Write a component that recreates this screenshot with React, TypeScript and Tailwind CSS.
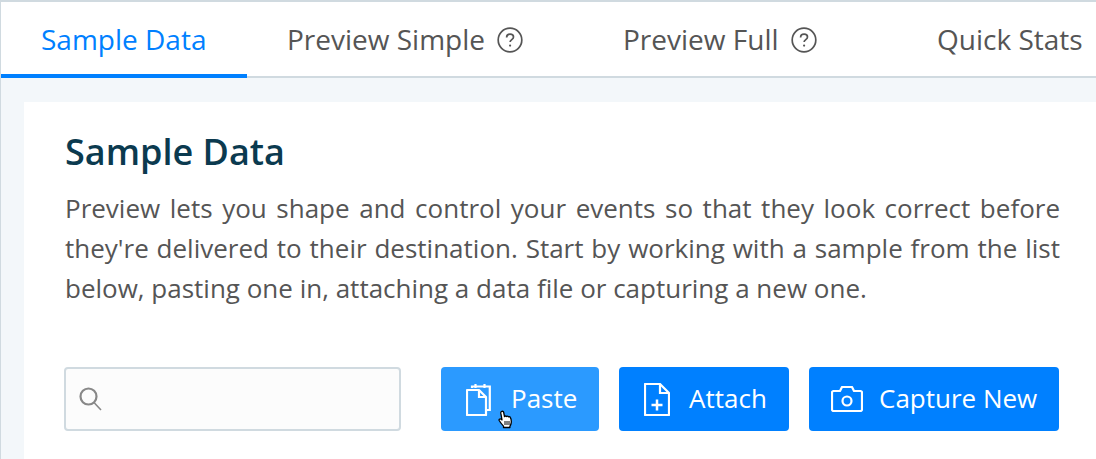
function HelpIcon() {
  return (
    <svg width="26" height="26" viewBox="0 0 26 26" fill="none" stroke="#555" className="shrink-0">
      <circle cx="13" cy="13" r="11.8" strokeWidth="1.7" />
      <path d="M9.6 10.4c0-2 1.5-3.3 3.5-3.3s3.4 1.2 3.4 2.9c0 2.6-3.4 2.6-3.4 5.1" strokeWidth="1.7" />
      <circle cx="13.1" cy="18.6" r="1.1" fill="#555" stroke="none" />
    </svg>
  );
}

function SearchIcon() {
  return (
    <svg width="23" height="24" viewBox="0 0 23 24" fill="none" stroke="#888" className="shrink-0">
      <circle cx="9.500" cy="9.500" r="8" strokeWidth="2.200" />
      <path d="M15 15.500l7 7.500" strokeWidth="1.600" />
    </svg>
  );
}

function PasteIcon() {
  return (
    <svg width="26" height="33" viewBox="0 0 26 33" fill="none" stroke="#fff" strokeWidth="2.2" className="shrink-0">
      <path d="M6 5V3.500h17.800V27H20" />
      <path d="M9.500 1v4M18.500 1v4" />
      <path d="M1 7h12l7 7v18H1z" strokeLinejoin="round" />
      <path d="M13 7v7h7" />
    </svg>
  );
}

function AttachIcon() {
  return (
    <svg width="26" height="33" viewBox="0 0 26 33" fill="none" stroke="#fff" strokeWidth="2.2" className="shrink-0">
      <path d="M1 1h15l9 9v22H1z" strokeLinejoin="round" />
      <path d="M16 1v9h9" />
      <path d="M13 16.500v11M7.500 22h11" strokeWidth="2.500" />
    </svg>
  );
}

function CameraIcon() {
  return (
    <svg width="32" height="26" viewBox="0 0 32 26" fill="none" stroke="#fff" strokeWidth="2.2" className="shrink-0">
      <path d="M2.500 5H9l2-4h10l2 4h6.500A1.500 1.500 0 0 1 31 6.500V23.500A1.500 1.500 0 0 1 29.500 25H2.500A1.500 1.500 0 0 1 1 23.500V6.500A1.500 1.500 0 0 1 2.500 5z" strokeLinejoin="round" />
      <circle cx="16" cy="15" r="4.500" />
    </svg>
  );
}

function HandCursor() {
  return (
    <svg width="16" height="20" viewBox="0 0 16 20" className="absolute left-[57px] top-[43px]">
      <path
        d="M3.500 1.500c1-.6 2 0 2.200 1l.8 4c.6-.6 1.500-.5 2 0 .6-.4 1.500-.3 2 .3.700-.3 1.500 0 1.800.6.800 1.500 1.200 3.500.9 5.500-.2 1.500-.7 2.500-1.300 3.400v1.200H5.500v-1.400C4 14.500 2.300 12.500 1.200 10.500c-.5-1 .5-2 1.500-1.500l1.300.9-1.200-6.700c-.1-.7.200-1.400.7-1.700z"
        fill="#fff"
        stroke="#000"
        strokeWidth="1.300"
        strokeLinejoin="round"
      />
      <path d="M7 11v4M9 11v4M11 11v4" stroke="#000" strokeWidth="1" />
    </svg>
  );
}

export default function App() {
  return (
    <div className="h-[459px] w-[1096px] overflow-hidden border-l border-t-2 border-[#d0dae0] bg-[#f3f7fa] font-['Open_Sans',sans-serif]">
      <div className="flex h-[76px] border-b-2 border-[#d0dae0] bg-white text-[28px] text-[#555] whitespace-nowrap">
        <div className="h-[76px] w-[246px] shrink-0 border-b-4 border-[#0080ff] pl-10 pt-[17px] leading-[40px] text-[#0080ff]">
          Sample Data
        </div>
        <div className="flex h-[74px] w-[336px] shrink-0 items-start gap-3 pl-10 pt-[17px] leading-[40px]">
          Preview Simple
          <span className="mt-[8px]"><HelpIcon /></span>
        </div>
        <div className="flex h-[74px] w-[314px] shrink-0 items-start gap-3 pl-10 pt-[17px] leading-[40px]">
          Preview Full
          <span className="mt-[8px]"><HelpIcon /></span>
        </div>
        <div className="h-[74px] shrink-0 pl-10 pt-[17px] leading-[40px]">Quick Stats</div>
      </div>

      <div className="ml-[23px] mt-6 h-[400px] bg-white pl-10 pr-9 pt-[28px]">
        <h1 className="ml-px text-[36px] font-semibold leading-[44px] text-[#0b3a4f]">Sample Data</h1>
        <p className="ml-px mt-[14px] text-justify text-[26px] leading-[40px] text-[#555]">
          Preview lets you shape and control your events so that they look correct before they're delivered to their destination. Start by working with a sample from the list below, pasting one in, attaching a data file or capturing a new one.
        </p>
        <div className="mt-[59px] flex items-start">
          <div className="flex h-16 w-[337px] items-center rounded border-2 border-[#d0dae0] bg-[#fcfcfc] pl-[13px]">
            <SearchIcon />
          </div>
          <button className="relative ml-10 flex h-16 w-[158px] items-center gap-[19px] rounded bg-[#2b9aff] pl-[25px] text-[26px] text-white">
            <PasteIcon />
            <span className="-mt-0.5">Paste</span>
            <HandCursor />
          </button>
          <button className="ml-5 flex h-16 w-[170px] items-center gap-[19px] rounded bg-[#0080ff] pl-[25px] text-[26px] text-white">
            <AttachIcon />
            <span className="-mt-0.5">Attach</span>
          </button>
          <button className="ml-5 flex h-16 w-[250px] items-center gap-4 rounded bg-[#0080ff] pl-[22px] text-[26px] text-white">
            <CameraIcon />
            <span className="-mt-0.5">Capture New</span>
          </button>
        </div>
      </div>
    </div>
  );
}
